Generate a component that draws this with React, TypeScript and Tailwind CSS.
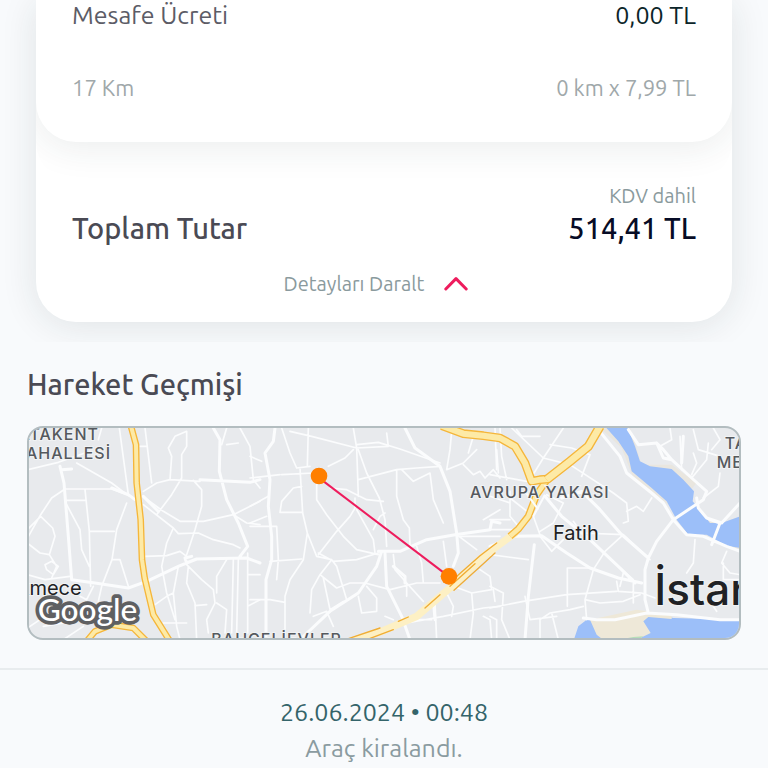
import { useState } from "react";

interface RouteEvent {
  date: string;
  time: string;
  text: string;
}

const EVENTS: RouteEvent[] = [
  { date: "26.06.2024", time: "00:48", text: "Araç kiralandı." },
];

// ─── Price card ──────────────────────────────────────────────────────────────

function PriceCard() {
  const [open, setOpen] = useState(true);

  return (
    <section className="overflow-hidden px-9 pb-5">
      <div className="rounded-b-[40px] bg-white shadow-[0_4px_36px_rgba(30,50,50,0.11)]">
        {open && (
          <div className="overflow-hidden rounded-b-[40px] pb-10 -mb-10">
            <dl className="rounded-b-[40px] bg-white px-9 pb-[39px] shadow-[0_6px_36px_rgba(30,50,60,0.09)]">
              <div className="flex justify-between text-[25px] leading-[31px]">
                <dt className="text-[#5c5c66]">Mesafe Ücreti</dt>
                <dd className="text-[#0b2529]">0,00 TL</dd>
              </div>
              <div className="mt-[42px] flex justify-between text-[22px] leading-[30px] text-[#a0a8aa]">
                <dt>17 Km</dt>
                <dd>0 km x 7,99 TL</dd>
              </div>
            </dl>
          </div>
        )}
        <div className="px-9 pt-10 pb-6">
          <p className="text-right text-xl leading-7 text-[#8a9a9d]">KDV dahil</p>
          <div className="flex justify-between text-[29px] leading-9 font-medium">
            <h2 className="text-[#4a4a54]">Toplam Tutar</h2>
            <p className="text-[#070c26]">514,41 TL</p>
          </div>
          <button
            onClick={() => setOpen((p) => !p)}
            aria-expanded={open}
            className="mx-auto mt-6 flex items-center gap-5 pr-4 text-xl leading-7 text-[#8a9a9d]"
          >
            Detayları Daralt
            <svg viewBox="0 0 24 14" className="h-[14px] w-6" fill="none" aria-hidden="true">
              <path d="M1.8 12 L12 1.6 L22.2 12" stroke="#ee1c5d" strokeWidth="3" strokeLinecap="round" strokeLinejoin="round" />
            </svg>
          </button>
        </div>
      </div>
    </section>
  );
}

// ─── Map ─────────────────────────────────────────────────────────────────────

// Three map tiles, each in its own coordinates
const WEST_ROADS = `
  M22 150 L115 128 L210 95 M22 356 L62 285 L95 235 L135 208 L275 208 L320 225
  M22 330 L62 290 L98 325 L105 350 L88 405 L60 400 L22 370
  M75 435 L95 425 L115 440 L100 465 L80 450 L75 435 M88 405 L110 440 L95 475
  M135 242 L195 242 M195 210 L208 335 L212 500 M208 335 L283 335
  M140 255 L180 330 L185 390 L208 440 M320 250 L290 330 L276 420 L300 420 L325 500
  M276 420 L245 500 L235 545 M170 130 L275 190 L325 228 M298 25 L325 225
  M245 25 L235 60 M22 465 L75 480 L150 470 M22 625 L60 600 M70 620 L130 610
  M375 25 L395 190 M360 80 L380 80 M370 215 L410 190 L450 180 L540 185
  M450 180 L455 110 L445 85 L465 50 L500 35 L500 80 L485 105 L485 175 L455 225 L410 285
  M520 182 L545 210 L545 260 L525 330 L495 420 M375 235 L430 275 L480 305 L550 305
  M550 305 L640 285 L720 245 M370 255 L460 325 L440 370 L425 440 L440 520 L465 600
  M460 325 L475 342 L535 340 L580 360 L640 375 L660 385 M375 410 L440 408 L480 395 L500 410
  M475 440 L460 520 L470 620 L480 660 M500 435 L545 480 L580 510
  M505 440 L500 490 L525 550 L530 660 M580 510 L585 550 L560 600 L565 640
  M620 420 L590 470 L590 520 M590 550 L620 570 L615 640 M525 558 L560 555
  M640 420 L635 640 M655 420 L650 640 M683 400 L683 640 M683 560 L720 540
  M683 465 L720 465 M660 25 L690 80 L700 180 L720 205 M620 75 L655 70
  M605 75 L620 25 M640 285 L680 310 L720 315 M220 500 L200 540 L180 530
  M130 660 L190 620 M430 610 L500 610 M405 555 L440 530 L460 520
`;
const WEST_STREETS = `
  M120 140 L132 190 L145 350 L155 480 L225 490 L325 505 L380 485 L475 440 L500 430
  M125 150 L155 148 M580 25 L600 60 L598 155 L620 240 L655 310 L683 380 L660 410
  M540 180 L690 188 L720 180 M500 430 L530 418 L680 415 L720 430
  M500 430 L495 415 L515 410 M275 205 L325 225 L345 240 M370 230 L415 275
`;

const MID_ROADS = `
  M95 25 L120 100 L140 145 L180 140 M95 165 L190 160 M0 175 L90 165 M175 25 L172 140
  M120 35 L185 50 L320 85 M235 140 L285 115 L310 90 M310 25 L320 85 L325 230
  M325 90 L350 160 L388 235 L405 300 L410 380 M320 85 L415 80 L410 40
  M320 75 L385 68 L450 88 L570 130
  M325 180 L440 150 L500 145 L570 140 M440 150 L440 230 L460 300 L478 325 L480 375
  M455 150 L490 185 L540 160 L550 240 L580 310 M590 150 L600 90 L605 35
  M590 150 L640 130 L680 90 M640 135 L670 165 L690 155 L705 175 L730 150 L750 175
  M655 100 L670 50 M735 25 L740 150 M150 145 L158 280 L172 340 L200 410
  M95 245 L130 205 L155 200 M95 245 L90 278 L155 278 M200 180 L200 240 L230 285 L280 350
  M280 350 L320 390 L385 405 M240 205 L290 210 L350 240 L400 245 M205 405 L260 335 L300 290
  M315 235 L315 265 L300 290 M320 270 L370 360 L375 400 M0 110 L35 125 M0 260 L55 230
  M0 310 L50 290 M0 320 L80 320 L85 420 L80 480 M172 340 L160 420 L120 480 L105 530 L105 660
  M60 425 L155 418 M0 540 L60 540 L105 548 M200 410 L245 420 L260 440 L290 540
  M205 400 L250 425 L320 420 L385 400 M245 420 L210 465 L185 510 L180 580
  M210 465 L260 505 L300 490 L350 490 M220 475 L240 570 L280 545
  M190 590 L230 575 L250 620 M325 530 L335 580 L380 575 L380 535 L350 500
  M345 490 L420 510 L500 490 L570 490 M430 405 L435 450 L470 490 L470 530
  M470 490 L520 545 M500 380 L515 430 L520 490 M405 280 L390 290 L370 330
  M620 345 L680 390 M630 350 L750 350 M580 365 L590 440
  M610 500 L665 520 L670 580 L660 660 M665 520 L725 510 L720 470 L690 450
  M555 550 L560 660 M470 610 L580 590 L700 565 L750 560 M475 600 L545 600
  M405 590 L430 600 M590 520 L610 560 L605 590 M700 590 L720 600 L725 660
  M730 510 L735 545 M750 270 L700 300
`;
const MID_STREETS = `
  M75 25 L70 65 L45 100 L60 180 L55 260 L65 350 L65 420 L48 480 L48 660
  M150 660 L240 575 L325 520 L380 440 L395 395 M465 25 L495 85 L570 140 L600 215 L620 340
  M385 395 L450 395 L530 360 L615 345 L720 330 L725 305 L750 310
  M405 400 L410 500 L455 590 L480 660 M620 340 L625 400 L610 440
  M430 440 L465 470 L465 490 M550 540 L555 600
`;

const EAST_ROADS = `
  M65 25 L160 115 L240 135 L370 220 L410 250 L415 305 L400 310 M160 115 L120 180
  M160 115 L220 25 M80 30 L95 50 L150 50 M180 75 L245 85 L300 105 L275 170
  M20 90 L25 160 M0 165 L110 185 M30 25 L35 110 L50 180 M0 230 L60 250
  M60 235 L130 290 L150 345 M170 225 L220 250 L190 310 L150 335 M60 215 L60 290 L85 320
  M0 300 L60 300 M0 330 L70 330 M250 305 L275 340 L400 345 L345 395
  M400 345 L480 420 M345 395 L310 450 L285 540 L290 600 M340 400 L430 480
  M220 360 L185 395 L150 350 M410 275 L440 260 L460 275 L485 235
  M0 405 L115 420 M232 445 L305 445 M232 445 L232 560 M0 565 L100 545 L230 525 L380 515
  M0 500 L40 520 L35 600 L60 660 M0 590 L20 600 L20 660 M105 530 L120 600 L200 590
  M285 540 L330 550 L400 545 L450 525 M380 485 L385 515 L455 520 L495 535
  M280 560 L240 570 L180 580 L150 600 M430 490 L430 550 M150 600 L150 660 M185 580 L205 660
  M400 460 L390 500 M615 360 L610 430 L590 460 M710 395 L695 430 L720 460 L750 465
  M700 430 L700 480 L750 480 M670 560 L680 575 M610 30 L625 90 L690 110
  M570 50 L575 150 M655 70 L650 120 L605 175 M610 100 L620 130 L605 165
  M670 25 L690 60 L665 90 M690 160 L685 200 L640 235 M540 25 L545 60 L510 80
`;
const EAST_STREETS = `
  M165 230 L215 290 L300 360 L395 450 L435 490 M215 235 L275 215 L330 270 L395 345 L475 415
  M0 380 L75 350 L155 348 L230 400 L300 445 L385 475 L455 490
  M133 375 L115 530 L105 660 M325 30 L390 110 L410 160 L485 220 L520 250 L550 300
  M550 300 L500 365 L475 415 L465 450 L465 540 L475 580 M550 300 L640 240 L650 215 L605 175 L545 120
  M545 120 L520 90 L500 70 L445 75 L415 30 M545 120 L520 115 L500 70
  M580 50 L575 130 M620 235 L625 265 L650 295 L695 310 L750 250
  M550 300 L590 345 L640 350 L710 380 L750 395 M665 375 L690 310 L660 300
  M280 595 L320 600 L375 600 L470 580 L560 585 L690 600 L750 600
`;

function Roads({ thin, thick }: { thin: string; thick: string }) {
  return (
    <g stroke="#fbfcfd" strokeLinejoin="round" strokeLinecap="round" fill="none">
      <path d={thin} strokeWidth="5" />
      <path d={thick} strokeWidth="9" />
    </g>
  );
}

function Motorway({ d, wide = 22 }: { d: string; wide?: number }) {
  return (
    <g fill="none" strokeLinejoin="round">
      <path d={d} stroke="#f5b63a" strokeWidth={wide} />
      <path d={d} stroke="#fdeaa6" strokeWidth={wide - 8} />
    </g>
  );
}

function RouteMap() {
  return (
    <div className="h-[214px] overflow-hidden rounded-2xl border-2 border-[#b3bdc0] bg-[#e8eaed]">
      <svg
        viewBox="0 0 2130 630"
        preserveAspectRatio="xMidYMid slice"
        className="h-full w-full font-['Inter','Liberation_Sans',sans-serif]"
        role="img"
        aria-label="Hareket haritası"
      >
        {/* Water and parks */}
        <g transform="translate(1383 -25)">
          <path
            d="M325 20 L395 85 L430 175 L485 215 L540 260 L590 340 L650 345 L750 395 L750 290 L690 312 L640 300 L605 250 L590 225 L620 190 L545 135 L455 135 L420 25 Z"
            fill="#e9e6df"
          />
          <path
            d="M345 20 L385 65 L415 110 L425 155 L485 205 L530 245 L560 300 L595 345 L650 345 L710 378 L750 385 L750 290 L695 310 L660 310 L625 265 L608 245 L612 215 L580 180 L545 148 L480 140 L450 125 L435 80 L412 22 Z"
            fill="#9cbff9"
          />
          <path d="M250 665 L265 620 L290 600 L480 580 L550 595 L750 600 L750 665 Z" fill="#9cbff9" />
          <path d="M300 600 L440 570 L545 585 L545 598 L475 592 L460 605 L482 640 L430 665 L345 665 L320 645 Z" fill="#eee8d8" />
          <path d="M375 662 L430 652 L460 650 L440 664 Z" fill="#b6deb9" />
        </g>

        <g transform="translate(-27 -25)">
          <Roads thin={WEST_ROADS} thick={WEST_STREETS} />
          <Motorway d="M333 20 L348 75 L350 190 L362 300 L366 420 L374 475 L400 585 L450 665" wide={20} />
          <Motorway d="M200 665 L225 635 L275 615 L340 625 L380 665" wide={20} />
        </g>
        <g transform="translate(663 -25)">
          <Roads thin={MID_ROADS} thick={MID_STREETS} />
        </g>
        <g transform="translate(1383 -25)">
          <Roads thin={EAST_ROADS} thick={EAST_STREETS} />
          {/* Coast road: pale surface with a broken orange edge */}
          <g fill="none" strokeLinejoin="round" strokeLinecap="round">
            <path d="M-425 668 L-325 635 L-220 590 L-120 505 L-20 410 L75 340" stroke="#fdf0c4" strokeWidth="22" />
            <path
              d="M-425 657 L-330 625 M-375 662 L-290 630 M-275 605 L-245 592 M-195 565 L-150 525 M-125 492 L-30 408 L20 370 M-108 512 L-20 432 L15 400 M-120 500 L-45 432"
              stroke="#f0ad35"
              strokeWidth="4"
            />
          </g>
          <Motorway d="M60 350 L85 328 L115 290 L140 225 L175 175" wide={22} />
          <Motorway d="M-145 18 L-80 42 L-20 48 L30 55 L75 80 L105 130 L125 185 L150 180 L175 178" wide={26} />
          <Motorway d="M330 20 L295 80 L240 125 L170 180" wide={28} />
          <path d="M105 215 L145 270 M165 225 L130 290" stroke="#fbfcfd" strokeWidth="6" />
        </g>

        {/* District names */}
        <g fill="#55595e" stroke="#f1f3f4" strokeWidth="6" paintOrder="stroke" fontSize="48" letterSpacing="3" fontWeight="500">
          <text x="210" y="36" textAnchor="end">ATAKENT</text>
          <text x="246" y="94" textAnchor="end">MAHALLESİ</text>
          <text x="1323" y="209">AVRUPA YAKASI</text>
          <text x="2087" y="62">TAŞ</text>
          <text x="2063" y="120">MER</text>
          <text x="547" y="651">BAHÇELİEVLER</text>
        </g>
        <g fill="#202124" stroke="#f1f3f4" strokeWidth="6" paintOrder="stroke">
          <text x="158" y="500" textAnchor="end" fontSize="60">kmece</text>
          <text x="1572" y="336" fontSize="60">Fatih</text>
          <text x="1876" y="531" fontSize="132" fontWeight="500">İstanbul</text>
        </g>
        <text
          x="26"
          y="580"
          fill="#ffffff"
          stroke="#5f6062"
          strokeWidth="22"
          strokeLinejoin="round"
          paintOrder="stroke"
          fontSize="95"
          fontWeight="500"
          className="font-['Lato',sans-serif]"
        >
          Google
        </text>

        {/* Travelled route */}
        <path d="M869 149 L1259 445" stroke="#ee1c5d" strokeWidth="6" />
        <circle cx="870" cy="144" r="25" fill="#ff7f00" />
        <circle cx="1260" cy="445" r="25" fill="#ff7f00" />
      </svg>
    </div>
  );
}

export default function App() {
  return (
    <main className="min-h-screen overflow-hidden bg-[#f8fafc] font-['Ubuntu','Noto_Sans',sans-serif]">
      <PriceCard />

      <section className="px-[27px] pt-6 pb-7">
        <h2 className="mb-6 text-[29px] leading-9 font-medium text-[#4a4a54]">Hareket Geçmişi</h2>
        <RouteMap />
      </section>

      <ul>
        {EVENTS.map((e) => (
          <li key={e.time} className="border-t-2 border-[#e8ecee] pt-6 text-center text-[25px] leading-9">
            <p className="text-[#34646a]">
              {e.date} • {e.time}
            </p>
            <p className="text-[#8a9ba0]">{e.text}</p>
          </li>
        ))}
      </ul>
    </main>
  );
}
